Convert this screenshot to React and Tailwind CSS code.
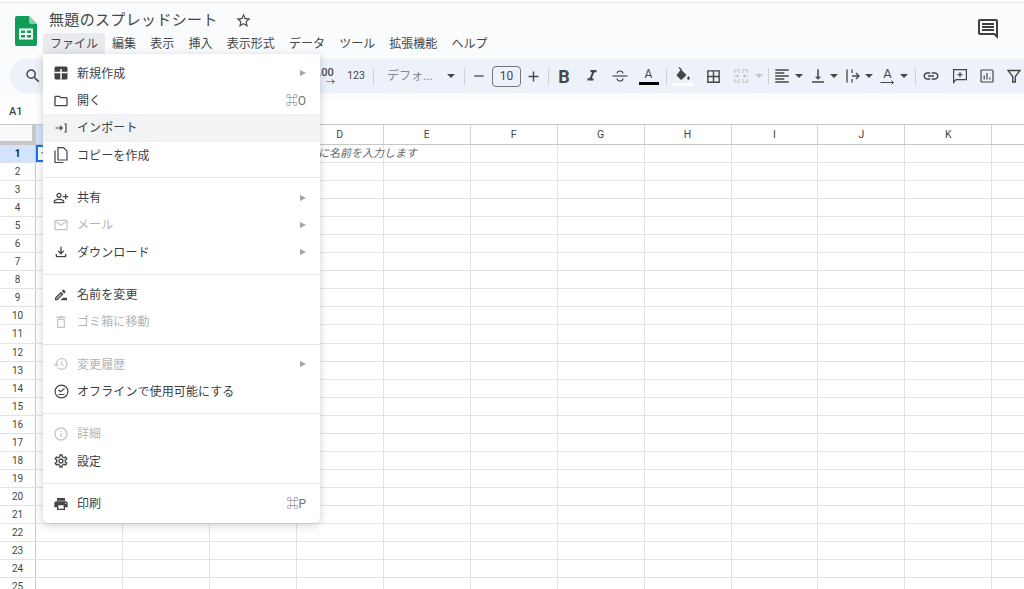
import React from "react";
import {
  MdSearch, MdStarBorder, MdOutlineFolder, MdOutlinePersonAddAlt, MdMailOutline, MdOutlineFileDownload,
  MdOutlineDriveFileRenameOutline, MdOutlineDelete, MdHistory, MdInfoOutline, MdOutlineSettings, MdPrint,
  MdFormatItalic, MdBorderAll, MdFormatAlignLeft, MdVerticalAlignBottom,
  MdLink, MdOutlineComment, MdAdd, MdRemove,
} from "react-icons/md";

const font = "font-['Roboto','Noto_Sans_CJK_JP',sans-serif]";
const cols = ["", "", "", "D", "E", "F", "G", "H", "I", "J", "K", ""];

function Caret({ light }) {
  return (
    <span className={`w-0 h-0 border-l-[4px] border-r-[4px] border-t-[4px] border-l-transparent border-r-transparent ${light ? "border-t-[#c4c7c5]" : "border-t-[#444746]"}`} />
  );
}

function Sep() {
  return <span className="w-px h-[17px] bg-[#cdd2d9] shrink-0" />;
}

function Item({ icon, label, shortcut, arrow, disabled, hover }) {
  return (
    <div className={`h-[27.35px] flex items-center pl-[10px] pr-[14px] ${hover ? "bg-[#f1f3f4]" : ""} ${disabled ? "text-[#b2b5b8]" : "text-[#3c4043]"}`}>
      <span className={`w-[16px] h-[18px] flex items-center justify-center text-[16px] mr-[8px] ${disabled ? "text-[#c4c6c8]" : "text-[#444746]"}`}>{icon}</span>
      <span className="flex-1 pt-[1px] text-[12px] tracking-[0.1px]">{label}</span>
      {shortcut && <span className="text-[12px] text-[#6f7377]">{shortcut}</span>}
      {arrow && <span className="w-0 h-0 border-t-[3.5px] border-b-[3.5px] border-l-[6px] border-t-transparent border-b-transparent border-l-[#a0a4a8]" />}
    </div>
  );
}

function Divider() {
  return <div className="h-px bg-[#e3e5e7] mt-[8px] mb-[6px]" />;
}

const NewIcon = () => (
  <svg width="14" height="14" viewBox="0 0 14 14"><rect x="0.5" y="0.5" width="13" height="13" rx="1.500" fill="#3f4142" /><path d="M0.500 6.500h13M7 3v10.500" stroke="#fff" strokeWidth="1.500" fill="none" /></svg>
);
const ImportIcon = () => (
  <svg width="14" height="14" viewBox="0 0 14 14" fill="none" stroke="#444746" strokeWidth="1.200"><path d="M1.500 7h6.500M6 4.800 8.200 7 6 9.200" /><path d="M10.500 3.200h1.500v7.600h-1.500" /></svg>
);
const OfflineIcon = () => (
  <svg width="15" height="15" viewBox="0 0 15 15" fill="none" stroke="#444746" strokeWidth="1.200"><circle cx="7.500" cy="7.500" r="6.400" /><path d="M4.500 6 6.500 7.800 10.500 4.500M4.500 10.500h6" /></svg>
);
const CopyIcon = () => (
  <svg width="16" height="18" viewBox="0 0 16 18" fill="none" stroke="#444746" strokeWidth="1.200"><path d="M5 1.600h5.500L14 5v9H5z" /><path d="M2 4.500v12h8.500" /></svg>
);
const MergeIcon = () => (
  <svg width="16" height="18" viewBox="0 0 16 18" fill="none" stroke="#c4c7c5" strokeWidth="1.200"><path d="M1.500 6V3h4.500v3M10 6V3h4.500v3M1.500 12v3h4.500v-3M10 12v3h4.500v-3M1 9h4M4 7.500 5.500 9 4 10.500M15 9h-4M12 7.500 10.500 9l1.500 1.500" /></svg>
);
const WrapIcon = () => (
  <svg width="16" height="18" viewBox="0 0 16 18" fill="none" stroke="#444746" strokeWidth="1.300"><path d="M2 2.500v13M7 2.500v3.500M7 12v3.500M7 9h7M11 6l3 3-3 3" /></svg>
);
const StrikeIcon = () => (
  <svg width="16" height="14" viewBox="0 0 16 14" fill="none" stroke="#444746" strokeWidth="1.200"><path d="M0.500 7h15" /><path d="M11 4.500C10.800 2.800 9.500 2 8 2S5.200 2.800 5.200 4.200M5 9.500C5.200 11.200 6.500 12 8 12s3-.8 3-2.500" /></svg>
);
const FillIcon = () => (
  <svg width="16" height="15" viewBox="0 0 16 15">
    <path d="M4 0.500 6.500 3" stroke="#444746" strokeWidth="1.300" fill="none" />
    <path d="M6 2.500 11.500 8 7 12.500a1 1 0 0 1-1.400 0L2 9a1 1 0 0 1 0-1.400z" fill="#444746" />
    <path d="M13.500 9c.8 1.200 1.300 1.800 1.300 2.500a1.300 1.300 0 0 1-2.600 0c0-.7.500-1.300 1.300-2.500z" fill="#444746" />
  </svg>
);
const CommentAddIcon = () => (
  <svg width="16" height="16" viewBox="0 0 16 16" fill="none" stroke="#444746" strokeWidth="1.200"><path d="M1.600 1.600h12.800v10H4l-2.400 2.800z" /><path d="M8 4v5.200M5.400 6.600h5.200" /></svg>
);
const ChartIcon = () => (
  <svg width="14" height="14" viewBox="0 0 14 14" fill="none" stroke="#444746" strokeWidth="1.200"><rect x="1" y="1" width="12" height="12" rx="1" /><path d="M4.200 6.500v4M7 4v6.500M9.800 8.500v2" /></svg>
);
const FunnelIcon = () => (
  <svg width="14" height="14" viewBox="0 0 14 14" fill="none" stroke="#444746" strokeWidth="1.400"><path d="M1 1.500h12L8.300 7.500v5.500H5.700V7.500z" /></svg>
);
const RotateArrow = () => (
  <svg width="15" height="5" viewBox="0 0 15 5" fill="none" stroke="#444746" strokeWidth="1"><path d="M0.500 2.500h13M11.500 0.500l2 2-2 2" /></svg>
);
const Logo = () => (
  <svg width="22" height="30" viewBox="0 0 22 30">
    <path d="M14 0H2a2 2 0 0 0-2 2v26a2 2 0 0 0 2 2h18a2 2 0 0 0 2-2V8z" fill="#0f9d58" />
    <path d="M14 0v6a2 2 0 0 0 2 2h6z" fill="#87ceac" />
    <path d="M5 13.500h12v9H5z" fill="none" stroke="#fff" strokeWidth="1.800" />
    <path d="M5 18h12M11 13.500v9" stroke="#fff" strokeWidth="1.800" />
  </svg>
);

function T({ className = "", children }) {
  return <span className={`h-full flex items-center justify-center shrink-0 text-[18px] text-[#444746] ${className}`}>{children}</span>;
}

export default function App() {
  const menus = ["編集", "表示", "挿入", "表示形式", "データ", "ツール", "拡張機能", "ヘルプ"];
  return (
    <div className={`relative w-[1024px] h-[589px] overflow-hidden bg-white ${font}`}>
      <div className="h-[3px] bg-white border-b border-[#e8e8e8]" />
      {/* header */}
      <div className="h-[56px] bg-[#f9fbfd] flex items-start pl-[15px] pr-[24px]">
        <div className="mt-[13px] shrink-0"><Logo /></div>
        <div className="ml-[7px] flex-1">
          <div className="h-[30px] flex items-center pl-[5px] pt-[5px]">
            <span className="text-[15px] tracking-[0.34px] text-[#444746]">無題のスプレッドシート</span>
            <MdStarBorder className="ml-[17px] text-[17px] text-[#444746]" />
          </div>
          <div className="flex h-[21px] text-[12px] text-[#444746] -ml-[1px]">
            <span className="h-[21px] px-[7px] flex items-center bg-[#e8eaed] rounded-t-[4px]">ファイル</span>
            {menus.map((m) => (
              <span key={m} className="h-[21px] px-[7.1px] flex items-center">{m}</span>
            ))}
          </div>
        </div>
        <MdOutlineComment className="mt-[14px] text-[24px] text-[#3c4043]" />
      </div>
      {/* toolbar */}
      <div className="bg-[#f9fbfd] pl-[10px]">
        <div className="h-[34px] bg-[#edf2fa] rounded-l-[17px] flex items-center pl-[9px]">
          <T className="w-[28px]"><MdSearch /></T>
          <span className="w-[266px] shrink-0" />
          <span className="w-[26px] h-full shrink-0 relative flex flex-col items-center justify-center text-[#444746]">
            <span className="text-[11px] leading-[11px] font-medium">.00</span>
            <span className="self-end mr-[4px] text-[9px] leading-[8px]">→</span>
          </span>
          <span className="w-[34px] shrink-0 text-center text-[10.5px] text-[#444746]">123</span>
          <Sep />
          <span className="w-[90px] shrink-0 h-full flex items-center pl-[13px] text-[12px] text-[#80868b]">
            <span className="w-[60px]">デフォ...</span>
            <Caret />
          </span>
          <Sep />
          <T className="w-[27px]"><MdRemove className="text-[16px]" /></T>
          <span className="w-[29px] h-[21px] shrink-0 border border-[#747775] rounded-[4px] flex items-center justify-center text-[12px] text-[#444746]">10</span>
          <T className="w-[25px] mr-[2px]"><MdAdd className="text-[17px]" /></T>
          <Sep />
          <T className="w-[28px] ml-[1px] text-[12px] font-bold">B</T>
          <T className="w-[28px]"><MdFormatItalic className="text-[18px]" /></T>
          <T className="w-[28px]"><StrikeIcon /></T>
          <span className="w-[29px] h-full shrink-0 flex flex-col items-center justify-center">
            <span className="text-[12px] leading-[13px] text-[#444746]">A</span>
            <span className="w-[20px] h-[3px] bg-black mt-[1px]" />
          </span>
          <span className="w-[3px] shrink-0" />
          <Sep />
          <span className="w-[32px] h-full shrink-0 flex flex-col items-center justify-center">
            <FillIcon />
            <span className="w-[20px] h-[3px] bg-white mt-[1px]" />
          </span>
          <T className="w-[28px]"><MdBorderAll className="text-[17px]" /></T>
          <T className="w-[28px]"><MergeIcon /></T>
          <T className="w-[13px] justify-start"><Caret light /></T>
          <Sep />
          <T className="w-[26px]"><MdFormatAlignLeft className="text-[18px]" /></T>
          <T className="w-[8px]"><Caret /></T>
          <T className="w-[25px] ml-[2px]"><MdVerticalAlignBottom className="text-[18px]" /></T>
          <T className="w-[8px]"><Caret /></T>
          <T className="w-[24px] ml-[3px]"><WrapIcon /></T>
          <T className="w-[8px]"><Caret /></T>
          <span className="w-[25px] ml-[2px] h-full shrink-0 flex flex-col items-center justify-center text-[#444746]">
            <span className="text-[13px] leading-[12px]">A</span>
            <RotateArrow />
          </span>
          <T className="w-[8px]"><Caret /></T>
          <span className="w-[7px] shrink-0" />
          <Sep />
          <T className="w-[30px]"><MdLink className="text-[18px]" /></T>
          <T className="w-[28px]"><CommentAddIcon /></T>
          <T className="w-[26px]"><ChartIcon /></T>
          <T className="w-[28px]"><FunnelIcon /></T>
        </div>
      </div>
      {/* name box row */}
      <div className="h-[31px] bg-gradient-to-b from-[#f9fbfd] to-white to-30% flex items-center pl-[9px] pt-[8px] text-[11px] font-medium text-[#444746]">A1</div>
      {/* grid */}
      <div className="border-t border-[#c7c7c7]">
        <div className="flex h-[20px] border-b border-[#c7c7c7] text-[10.5px] text-[#444746]">
          <div className="w-[36px] shrink-0 bg-[#f8f9fa] border-r-[4px] border-b-[3px] border-[#c7c7c7]" />
          {cols.map((c, i) => (
            <div key={i} className={`w-[86.95px] shrink-0 border-r border-[#d5d5d5] flex items-center justify-center ${i === 0 ? "bg-[#d3e3fd]" : ""}`}>{c}</div>
          ))}
        </div>
        {Array.from({ length: 25 }, (_, r) => (
          <div key={r} className="flex h-[18.06px] border-b border-[#e2e3e3]">
            <div className={`w-[36px] shrink-0 border-r border-[#c7c7c7] flex items-center justify-center text-[10px] ${r === 0 ? "bg-[#d3e3fd] font-bold text-[#041e49]" : "text-[#444746]"}`}>{r + 1}</div>
            {cols.map((c, i) => (
              <div key={i} className={`w-[86.95px] shrink-0 ${r === 0 && i === 0 ? "relative border-2 border-[#1a73e8]" : "border-r border-[#e2e3e3]"}`}>
                {r === 0 && i === 0 && (
                  <span className="absolute left-[1px] top-[1px] bottom-0 flex items-center whitespace-nowrap text-[11px] italic text-[#666]">
                    <span className="mr-[268px]">ー</span><span>に名前を入力します</span>
                  </span>
                )}
              </div>
            ))}
          </div>
        ))}
      </div>
      {/* file menu */}
      <div className="absolute left-[43px] top-[54px] w-[277px] h-[469px] bg-white rounded-b-[6px] shadow-[0_2px_8px_rgba(60,64,67,0.25)] pt-[5.5px]">
        <Item icon={<NewIcon />} label="新規作成" arrow />
        <Item icon={<MdOutlineFolder />} label="開く" shortcut="⌘O" />
        <Item icon={<ImportIcon />} label="インポート" hover />
        <Item icon={<CopyIcon />} label="コピーを作成" />
        <Divider />
        <Item icon={<MdOutlinePersonAddAlt />} label="共有" arrow />
        <Item icon={<MdMailOutline />} label="メール" arrow disabled />
        <Item icon={<MdOutlineFileDownload />} label="ダウンロード" arrow />
        <Divider />
        <Item icon={<MdOutlineDriveFileRenameOutline />} label="名前を変更" />
        <Item icon={<MdOutlineDelete />} label="ゴミ箱に移動" disabled />
        <Divider />
        <Item icon={<MdHistory />} label="変更履歴" arrow disabled />
        <Item icon={<OfflineIcon />} label="オフラインで使用可能にする" />
        <Divider />
        <Item icon={<MdInfoOutline />} label="詳細" disabled />
        <Item icon={<MdOutlineSettings />} label="設定" />
        <Divider />
        <Item icon={<MdPrint />} label="印刷" shortcut="⌘P" />
      </div>
    </div>
  );
}
